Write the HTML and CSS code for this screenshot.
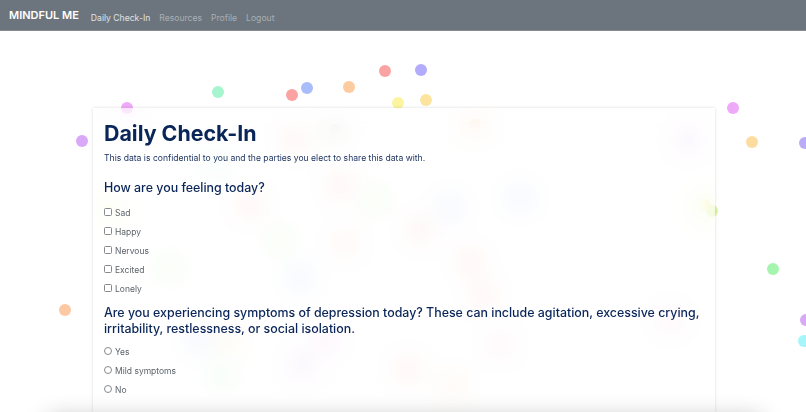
FILE: index.html
```html
<!DOCTYPE html>
<html lang="en">
<head>
  <meta charset="UTF-8" />
  <meta name="viewport" content="width=device-width, initial-scale=1.0"/>
  <title>Daily Check-In</title>
  <link rel="stylesheet" href="styles.css">
</head>
<body>

  <header class="navbar">
    <div class="brand">MINDFUL ME</div>
    <ul class="nav-links">
      <li><a class="active" href="#">Daily Check-In</a></li>
      <li><a href="#">Resources</a></li>
      <li><a href="#">Profile</a></li>
      <li><a href="#">Logout</a></li>
    </ul>
  </header>

  <div class="confetti" id="confetti"></div>

  <main class="card">
    <h1>Daily Check-In</h1>
    <p class="note">This data is confidential to you and the parties you elect to share this data with.</p>

    <h2 class="first">How are you feeling today?</h2>
    <label class="option"><input type="checkbox"> Sad</label>
    <label class="option"><input type="checkbox"> Happy</label>
    <label class="option"><input type="checkbox"> Nervous</label>
    <label class="option"><input type="checkbox"> Excited</label>
    <label class="option"><input type="checkbox"> Lonely</label>

    <h2>Are you experiencing symptoms of depression today? These can include agitation, excessive crying, irritability, restlessness, or social isolation.</h2>
    <label class="option"><input type="radio" name="dep"> Yes</label>
    <label class="option"><input type="radio" name="dep"> Mild symptoms</label>
    <label class="option"><input type="radio" name="dep"> No</label>
  </main>

  <div class="bottom-shade"></div>

  <script>
    // x, y, colour of each dot
    const dots = [
      [127,108,'#eeaaf8'],[82,141,'#d9a9f8'],[218,92,'#a6f5cf'],[292,95,'#fba3a3'],[307,88,'#aabdfb'],
      [349,87,'#fccb9f'],[385,71,'#fba3a3'],[421,70,'#b3abfb'],[398,103,'#fbf59f'],[426,100,'#fce49f'],
      [733,108,'#eeaaf8'],[752,142,'#fcdc9f'],[805,143,'#b9abf8'],[773,269,'#a6f5ae'],[65,310,'#fcc9a4'],
      [806,320,'#d9a9f8'],[804,341,'#a6f5f8'],[712,211,'#dff5a6'],
      [295,140,'#fba3a3'],[335,130,'#b8c8b0'],[475,125,'#fccb9f'],[688,140,'#d9a9f8'],[340,185,'#fba3a3'],
      [450,208,'#aabdfb'],[520,198,'#aabdfb'],[705,205,'#f5f5a0'],[250,205,'#fba3a3'],[280,240,'#b8f5a0'],
      [170,268,'#b8f5a0'],[345,243,'#fbb8b8'],[420,230,'#fba3a3'],[300,278,'#aabdfb'],[470,262,'#fba3a3'],
      [483,295,'#fba3a3'],[670,320,'#fbb8d0'],[200,340,'#aabdfb'],[228,340,'#fcdc9f'],[325,340,'#eeaaf8'],
      [302,365,'#d9a9f8'],[222,375,'#a6f5ae'],[408,370,'#fba3a3'],[452,385,'#fccb9f'],[375,200,'#b8f5a0'],
      [215,165,'#a6f5cf'],[110,210,'#f5f5a0'],[500,345,'#fbb8d0']
    ];
    const confetti = document.getElementById('confetti');
    dots.forEach(d => {
      const dot = document.createElement('span');
      dot.className = 'dot';
      dot.style.left = (d[0] - 6) + 'px';
      dot.style.top = (d[1] - 6) + 'px';
      dot.style.background = d[2];
      confetti.appendChild(dot);
    });
  </script>
</body>
</html>
```

FILE: styles.css
```css
* {margin:0; padding:0; box-sizing:border-box;}
html, body {height: 412px; overflow: hidden;}
body {font-family: Inter, "Liberation Sans", sans-serif; background: #fff; color: #0a2558; position: relative;}

.navbar {
  display: flex;
  align-items: center;
  height: 31px;
  padding: 0 9px;
  background: #6c757d;
  border-bottom: 1px solid #868c92;
}

.brand {font-size: 11px; font-weight: 600; color: #fff; margin-right: 12px;}

.nav-links {
  list-style: none;
  display: flex;
  gap: 9px;
}

.nav-links a {
  font-size: 8.6px;
  color: #a9afb4;
  text-decoration: none;
}

.nav-links a.active {color: #e0e2e4;}

.confetti {position: absolute; inset: 0; overflow: hidden;}

.dot {
  position: absolute;
  width: 12px;
  height: 12px;
  border-radius: 50%;
}

.card {
  position: relative;
  width: 622px;
  height: 304px;
  margin: 77px 0 0 93px;
  padding: 11px 11px 0;
  background: rgba(255,255,255,0.4);
  backdrop-filter: blur(13px);
  box-shadow: 0 0 3px rgba(0,0,0,0.14);
}

h1 {font-size: 21.4px; font-weight: 700; line-height: 29px; color: #0a2558;}

.note {font-size: 8.6px; line-height: 14px; margin-top: 3px; color: #1f3563;}

h2 {font-size: 12.4px; font-weight: 500; line-height: 16px; margin: 7px 0 5px; color: #0a2558;}
h2.first {margin-top: 15px; margin-bottom: 7px;}

.option {
  display: flex;
  align-items: center;
  gap: 3px;
  height: 19px;
  font-size: 8.5px;
  color: #5c636a;
}

.option input {
  appearance: none;
  width: 8px;
  height: 8px;
  margin-bottom: 2px;
  background: #fff;
  border: 1px solid #85898d;
  border-radius: 1.5px;
}

.option input[type="radio"] {border-radius: 50%;}

.bottom-shade {
  position: absolute;
  left: 48px;
  right: 44px;
  top: 420px;
  height: 20px;
  box-shadow: 0 0 24px rgba(0,0,0,0.32);
}
```
